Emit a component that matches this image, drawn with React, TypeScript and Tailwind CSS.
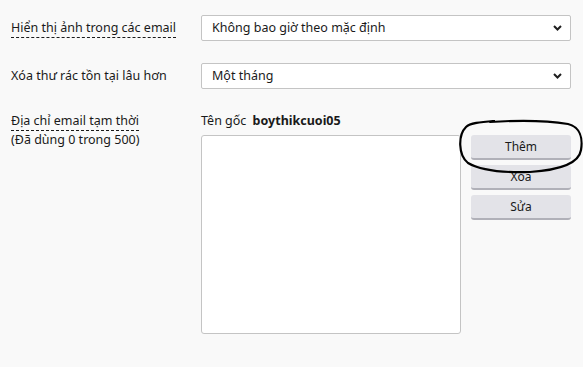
import React from "react";

function Chevron() {
  return (
    <svg width="9" height="6" viewBox="0 0 9 6" className="shrink-0">
      <path d="M1 1 L4.5 4.5 L8 1" fill="none" stroke="#1f1f1f" strokeWidth="2" />
    </svg>
  );
}

function Select({ value }: { value: string }) {
  return (
    <div className="flex h-[26px] w-[370px] items-center justify-between rounded-[2px] border border-[#c4c4c4] bg-white pl-[10px] pr-[8px] text-[12.5px] text-[#1a1a1a]">
      <span>{value}</span>
      <Chevron />
    </div>
  );
}

function Btn({ label }: { label: string }) {
  return (
    <div className="flex h-[25px] w-[100px] items-center justify-center rounded-[3px] border-b-2 border-[#b0b0b8] bg-[#e3e3e8] text-[12px] text-[#1a1a1a]">
      {label}
    </div>
  );
}

export default function App() {
  return (
    <div
      className="relative h-[367px] w-[583px] overflow-hidden bg-[#f9f9f9] text-[#1a1a1a]"
      style={{ fontFamily: '"Noto Sans", "Open Sans", sans-serif' }}
    >
      <div className="flex flex-col pl-[11px] pt-[15px]">
        <div className="flex items-center">
          <div className="w-[190px] text-[12.5px]">
            <span className="border-b border-dashed border-[#1a1a1a] pb-[1px]">Hiển thị ảnh trong các email</span>
          </div>
          <Select value="Không bao giờ theo mặc định" />
        </div>
        <div className="mt-[22px] flex items-center">
          <div className="w-[190px] text-[12.5px]">Xóa thư rác tồn tại lâu hơn</div>
          <Select value="Một tháng" />
        </div>
        <div className="mt-[23px] flex">
          <div className="w-[190px] text-[12.5px] leading-[18px]">
            <span className="border-b border-dashed border-[#1a1a1a] pb-[1px]">Địa chỉ email tạm thời</span>
            <div className="mt-[1px]">(Đã dùng 0 trong 500)</div>
          </div>
          <div className="flex flex-col">
            <div className="h-[23px] text-[12.5px] leading-[18px]">
              Tên gốc <span className="ml-[3px] font-bold">boythikcuoi05</span>
            </div>
            <div className="flex gap-[10px]">
              <div className="h-[199px] w-[260px] rounded-[3px] border border-[#c4c4c4] bg-white" />
              <div className="flex flex-col gap-[5px]">
                <Btn label="Thêm" />
                <Btn label="Xóa" />
                <Btn label="Sửa" />
              </div>
            </div>
          </div>
        </div>
      </div>
      <svg className="pointer-events-none absolute left-0 top-0" width="583" height="367">
        <path
          d="M490 122 C 520 120, 550 121, 568 124 C 580 127, 583 138, 581 150 C 579 163, 560 170, 530 172 C 500 173, 480 170, 468 163 C 458 155, 458 135, 466 127 C 470 123, 480 122, 494 121"
          fill="none"
          stroke="#000"
          strokeWidth="2.2"
          strokeLinecap="round"
        />
      </svg>
    </div>
  );
}
